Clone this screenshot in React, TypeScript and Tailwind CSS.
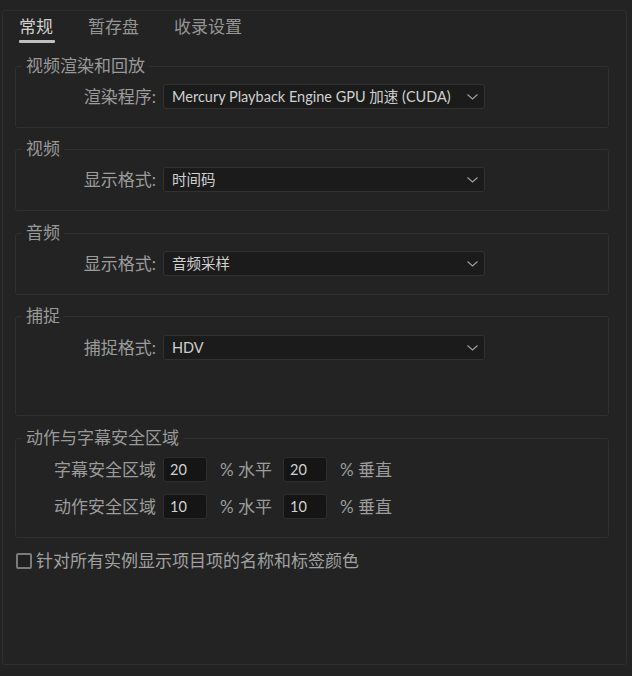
import React from "react";

const font = "font-['Lato','Noto_Sans_CJK_SC',sans-serif]";

function Chevron() {
  return (
    <svg width="11" height="6" viewBox="0 0 11 6" fill="none">
      <path d="M0.5 0.5 L5.5 5 L10.5 0.5" stroke="#a0a0a0" strokeWidth="1.1" />
    </svg>
  );
}

function Select({ value }: { value: string }) {
  return (
    <div className="w-[322px] h-[25px] bg-[#1b1b1b] border border-[#313131] rounded-[3px] flex items-center justify-between pl-[8px] pr-[6px]">
      <span className="text-[14.5px] leading-[20px] text-[#d0d0d0] whitespace-nowrap">{value}</span>
      <Chevron />
    </div>
  );
}

function Group({
  title,
  children,
  className,
}: {
  title: string;
  children: React.ReactNode;
  className: string;
}) {
  return (
    <fieldset className={`mx-[12px] w-[594px] border border-[#303030] rounded-[3px] ${className}`}>
      <legend className="ml-[6px] px-[4px] text-[17px] leading-[20px] text-[#999999]">{title}</legend>
      {children}
    </fieldset>
  );
}

function Row({ label, value }: { label: string; value: string }) {
  return (
    <div className="flex items-center">
      <div className="w-[147px] pr-[7px] text-right text-[17px] leading-[20px] text-[#9c9c9c]">{label}</div>
      <Select value={value} />
    </div>
  );
}

function NumInput({ v }: { v: string }) {
  return (
    <div className="w-[44px] h-[25px] bg-[#151515] border border-[#2e2e2e] rounded-[3px] flex items-center pl-[6px] text-[14.5px] text-[#d0d0d0]">
      {v}
    </div>
  );
}

function SafeRow({ label, a, b }: { label: string; a: string; b: string }) {
  return (
    <div className="flex items-center">
      <div className="w-[147px] pr-[7px] text-right text-[17px] leading-[20px] text-[#9c9c9c]">{label}</div>
      <NumInput v={a} />
      <div className="w-[76px] pl-[13px] text-[17px] leading-[20px] text-[#9c9c9c] whitespace-nowrap">% 水平</div>
      <NumInput v={b} />
      <div className="pl-[13px] text-[17px] leading-[20px] text-[#9c9c9c] whitespace-nowrap">% 垂直</div>
    </div>
  );
}

export default function App() {
  return (
    <div className={`w-[632px] h-[676px] bg-[#232323] pt-[10px] pl-[2px] ${font}`}>
      <div className="w-[625px] h-[655px] border border-[#2e2e2e] rounded-[3px] bg-[#232323]">
        <div className="flex pl-[16px] pt-[6px] text-[17px] leading-[20px]">
          <div className="flex flex-col">
            <span className="text-[#cecece]">常规</span>
            <div className="mt-[3px] h-[3px] w-[36px] bg-[#c0c0c0] rounded-[1px]" />
          </div>
          <span className="ml-[33px] text-[#959595]">暂存盘</span>
          <span className="ml-[35px] text-[#959595]">收录设置</span>
        </div>

        <Group title="视频渲染和回放" className="mt-[13px] pt-[8px] pb-[18px]">
          <Row label="渲染程序:" value="Mercury Playback Engine GPU 加速 (CUDA)" />
        </Group>

        <Group title="视频" className="mt-[11px] pt-[8px] pb-[18px]">
          <Row label="显示格式:" value="时间码" />
        </Group>

        <Group title="音频" className="mt-[12px] pt-[8px] pb-[18px]">
          <Row label="显示格式:" value="音频采样" />
        </Group>

        <Group title="捕捉" className="mt-[11px] pt-[9px] pb-[55px]">
          <Row label="捕捉格式:" value="HDV" />
        </Group>

        <Group title="动作与字幕安全区域" className="mt-[12px] pt-[9px] pb-[18px]">
          <div className="flex flex-col gap-[12px]">
            <SafeRow label="字幕安全区域" a="20" b="20" />
            <SafeRow label="动作安全区域" a="10" b="10" />
          </div>
        </Group>

        <div className="flex items-center gap-[4px] ml-[13px] mt-[13px]">
          <div className="w-[16px] h-[16px] border-2 border-[#7a7a7a] rounded-[2px] bg-[#1f1f1f]" />
          <span className="text-[17px] leading-[20px] text-[#a0a0a0]">针对所有实例显示项目项的名称和标签颜色</span>
        </div>
      </div>
    </div>
  );
}
